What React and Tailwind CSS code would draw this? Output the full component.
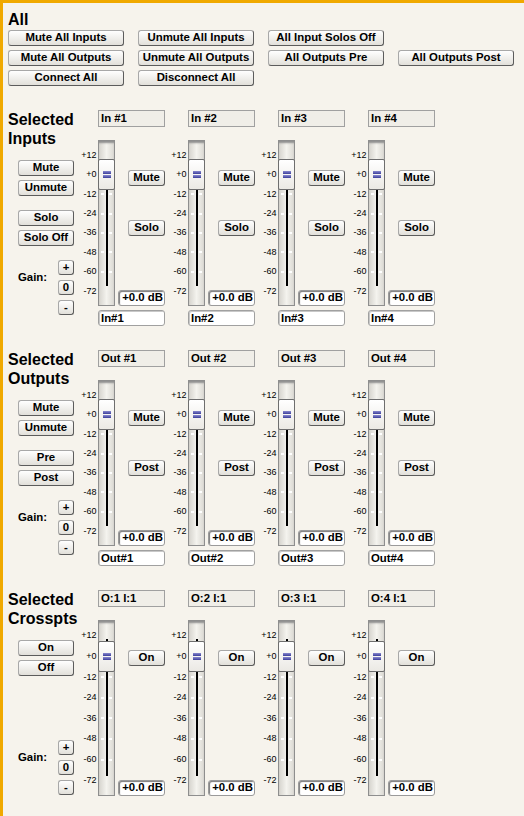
import React from "react";

const FONT = "font-['Liberation_Sans',Arial,sans-serif]";
const BTN =
  "flex items-center justify-center rounded-[3px] border border-[#a8a8a8] border-r-[#5c5c5c] border-b-[#5c5c5c] bg-linear-to-b from-white to-[#e2e0da] text-[11.4px] font-bold leading-none text-black whitespace-nowrap";

const SCALE = ["+12", "+0", "-12", "-24", "-36", "-48", "-60", "-72"];

function Button({ children, className = "" }) {
  return (
    <button type="button" className={`${BTN} ${className}`}>
      {children}
    </button>
  );
}

// vertical gain slider with its dB scale on the left
function Fader({ tall }) {
  const first = tall ? 16 : 15.3;
  const pitch = tall ? 20.6 : 19.4;
  return (
    <div className="flex">
      <div className={`flex w-[20px] flex-col items-end pr-[1.5px] ${tall ? "pt-[5.7px]" : "pt-[5.6px]"}`}>
        {SCALE.map((s) => (
          <div key={s} className={`flex items-center text-[9px] leading-none text-black ${tall ? "h-[20.6px]" : "h-[19.4px]"}`}>
            {s}
          </div>
        ))}
      </div>
      <div
        className={`relative w-[17px] border border-[#8e8e8e] bg-linear-to-r from-[#d6d4ce] via-[#f4f3ee] to-[#dbd9d3] shadow-[inset_0_3px_2px_-1px_#8f8f8f] ${
          tall ? "h-[176px]" : "h-[166px]"
        }`}
      >
        {[2, 3, 4, 5, 6].map((i) => (
          <React.Fragment key={i}>
            <div className="absolute left-[2px] h-[2px] w-[3px] bg-white" style={{ top: first + i * pitch - 2 }} />
            <div className="absolute left-[10px] h-[2px] w-[3px] bg-white" style={{ top: first + i * pitch - 2 }} />
          </React.Fragment>
        ))}
        <div className={`absolute left-[7px] top-[18px] w-[2px] bg-black ${tall ? "h-[137px]" : "h-[127px]"}`} />
        <div
          className={`absolute -left-px -right-px flex h-[31px] flex-col items-center justify-center gap-[1px] rounded-[2px] border border-[#6e6e6e] bg-linear-to-b from-white to-[#ebe9e4] ${
            tall ? "top-[20px]" : "top-[18px]"
          }`}
        >
          <div className="h-[3px] w-[8px] bg-linear-to-b from-[#8a8ad0] to-[#3d3d99]" />
          <div className="h-[3px] w-[8px] bg-linear-to-b from-[#8a8ad0] to-[#3d3d99]" />
        </div>
      </div>
    </div>
  );
}

function Channel({ label, name, buttons, tall }) {
  return (
    <div className="flex w-[90px] flex-col">
      <div className="ml-[20px] h-[17px] w-[67px] border border-[#a0a0a0] bg-[#f0eee8] pl-[2px] text-[11.4px] font-bold leading-[15px]">
        {label}
      </div>
      <div className="mt-[13px] flex">
        <Fader tall={tall} />
        <div className="ml-[3px] flex w-[47px] flex-col items-end">
          {buttons.map((b, i) => (
            <Button key={b} className={`h-[16px] w-[37px] ${i === 0 ? "mt-[30px]" : "mt-[34px]"}`}>
              {b}
            </Button>
          ))}
          <div className="mt-auto flex h-[16px] w-[47px] items-center justify-end rounded-[3px] border border-[#9a9a9a] bg-white pr-[1px] text-[11.4px] font-bold leading-none shadow-[inset_1px_1px_1px_#7a7a7a]">
            +0.0 dB
          </div>
        </div>
      </div>
      {name && (
        <input
          readOnly
          value={name}
          className="ml-[20px] mt-[4px] h-[16px] w-[67px] rounded-[3px] border border-[#a0a0a0] bg-white pl-[2px] text-[11.4px] font-bold leading-none text-black outline-none shadow-[inset_1px_1px_0_#c8c8c8]"
        />
      )}
    </div>
  );
}

function SidePanel({ title, groups, gainGap }) {
  return (
    <div className="flex w-[70px] flex-col">
      <h2 className="whitespace-nowrap text-[16px] font-bold leading-[19px]">
        Selected
        <br />
        {title}
      </h2>
      {groups.map((g, i) => (
        <div key={i} className={`flex flex-col gap-[4px] pl-[10px] ${i === 0 ? "mt-[12px]" : "mt-[14px]"}`}>
          {g.map((b) => (
            <Button key={b} className="h-[16px] w-[56px]">
              {b}
            </Button>
          ))}
        </div>
      ))}
      <div className={`flex pl-[10px] pr-[4px] ${gainGap}`}>
        <span className="mt-[11px] text-[11.4px] font-bold leading-[13px]">Gain:</span>
        <div className="ml-auto flex flex-col gap-[5px]">
          {["+", "0", "-"].map((g) => (
            <Button key={g} className="h-[15px] w-[16px]">
              {g}
            </Button>
          ))}
        </div>
      </div>
    </div>
  );
}

const ALL_BUTTONS = [
  "Mute All Inputs",
  "Unmute All Inputs",
  "All Input Solos Off",
  null,
  "Mute All Outputs",
  "Unmute All Outputs",
  "All Outputs Pre",
  "All Outputs Post",
  "Connect All",
  "Disconnect All",
];

export default function App() {
  return (
    <div className={`${FONT} min-h-[816px] border-l-[3px] border-t-[3px] border-[#f0a900] bg-[#f6f3ec] pl-[5px] pt-[7px] text-black`}>
      <h1 className="text-[16px] font-bold leading-[19px]">All</h1>
      <div className="mt-[1px] grid grid-cols-[repeat(4,116px)] gap-x-[14px] gap-y-[4px]">
        {ALL_BUTTONS.map((b, i) => (b ? <Button key={b} className="h-[16px]">{b}</Button> : <div key={i} />))}
      </div>

      <section className="mt-[24px] flex">
        <SidePanel title="Inputs" groups={[["Mute", "Unmute"], ["Solo", "Solo Off"]]} gainGap="mt-[14px]" />
        {[1, 2, 3, 4].map((n) => (
          <Channel key={n} label={`In #${n}`} name={`In#${n}`} buttons={["Mute", "Solo"]} />
        ))}
      </section>

      <section className="mt-[24px] flex">
        <SidePanel title="Outputs" groups={[["Mute", "Unmute"], ["Pre", "Post"]]} gainGap="mt-[14px]" />
        {[1, 2, 3, 4].map((n) => (
          <Channel key={n} label={`Out #${n}`} name={`Out#${n}`} buttons={["Mute", "Post"]} />
        ))}
      </section>

      <section className="mt-[24px] flex">
        <SidePanel title="Crosspts" groups={[["On", "Off"]]} gainGap="mt-[64px]" />
        {[1, 2, 3, 4].map((n) => (
          <Channel key={n} label={`O:${n} I:1`} buttons={["On"]} tall />
        ))}
      </section>
    </div>
  );
}
